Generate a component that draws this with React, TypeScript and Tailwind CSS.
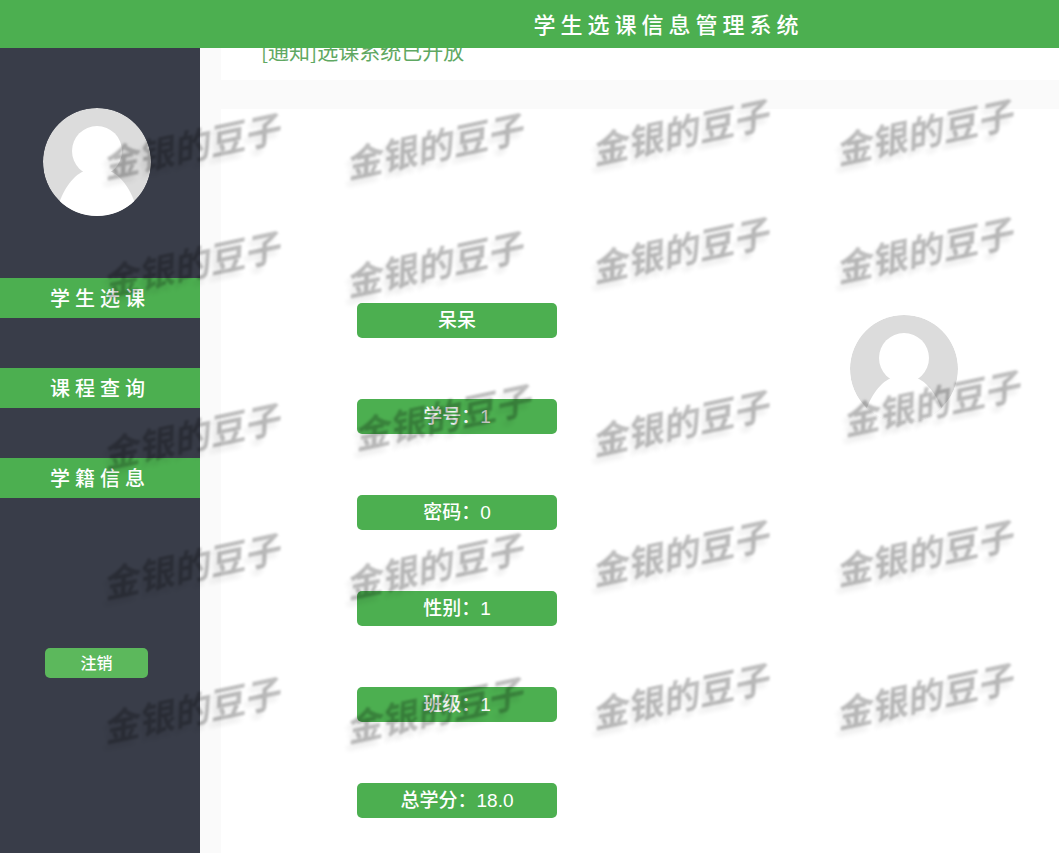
import React from "react";

const watermarkText = "金银的豆子";

const watermarks: [number, number][] = [
  [191, 148], [434, 148], [680, 134], [924, 134],
  [191, 266], [434, 266], [680, 252], [924, 252],
  [191, 438], [442, 419], [680, 425], [931, 405],
  [191, 568], [434, 568], [680, 555], [924, 555],
  [191, 712], [434, 712], [680, 698], [924, 698],
];

const menu = ["学生选课", "课程查询", "学籍信息"];

const profile = ["呆呆", "学号：1", "密码：0", "性别：1", "班级：1", "总学分：18.0"];

function Avatar() {
  return (
    <svg
      viewBox="0 0 108 108"
      className="size-[108px] shrink-0 overflow-hidden rounded-full"
      role="img"
      aria-label="头像"
    >
      <circle cx="54" cy="54" r="54" fill="#dcdcdc" />
      <circle cx="54" cy="43" r="25" fill="#fff" />
      <path d="M13 108C16 89 26 71 39 64H69C82 71 92 89 95 108Z" fill="#fff" />
    </svg>
  );
}

function Watermarks() {
  return (
    <div
      aria-hidden="true"
      className="pointer-events-none absolute inset-0 overflow-hidden select-none"
    >
      {watermarks.map(([x, y]) => (
        <span
          key={`${x}-${y}`}
          style={{ left: x, top: y }}
          className="absolute -translate-x-1/2 -translate-y-1/2 -rotate-12 text-[36px] font-bold whitespace-nowrap text-black/25 italic blur-[1px] [text-shadow:-5px_5px_5px_rgba(0,0,0,0.08)]"
        >
          {watermarkText}
        </span>
      ))}
    </div>
  );
}

export default function App() {
  return (
    <div className="relative flex min-h-screen flex-col bg-[#fafafa] font-['Liberation_Sans','Noto_Sans_CJK_SC',sans-serif]">
      <header className="relative z-10 flex h-12 items-center justify-center bg-[#4caf50] pt-0.5 pl-[278px]">
        <h1 className="text-[22px] font-medium tracking-[5px] text-white">学生选课信息管理系统</h1>
      </header>

      <div className="flex flex-1">
        <aside className="flex w-[200px] shrink-0 flex-col bg-[#393d49] pt-[60px]">
          <div className="pl-[43px]">
            <Avatar />
          </div>
          <nav className="mt-[62px] flex flex-col gap-[50px]">
            {menu.map((item) => (
              <a
                key={item}
                href="#"
                className="flex h-10 items-center justify-center bg-[#4caf50] pt-0.5 text-xl font-medium tracking-[5px] text-white"
              >
                {item}
              </a>
            ))}
          </nav>
          <button
            type="button"
            className="mt-[150px] ml-[45px] h-[30px] w-[103px] rounded-[5px] bg-[#5cb85c] pt-0.5 text-base font-medium text-white"
          >
            注销
          </button>
        </aside>

        <main className="flex min-w-0 flex-1 flex-col gap-[29px] pl-[21px]">
          <section className="flex h-8 items-end overflow-hidden bg-white pb-[18px] pl-10">
            <a
              href="#"
              className="font-['Noto_Sans_CJK_SC',sans-serif] text-[21px] leading-[24px] whitespace-nowrap text-[#5fa862]"
            >
              [通知]选课系统已开放
            </a>
          </section>

          <section className="flex flex-1 items-start gap-[293px] bg-white pt-[194px] pb-[35px] pl-[136px]">
            <div className="flex w-[200px] shrink-0 flex-col gap-[61px]">
              {profile.map((item) => (
                <button
                  key={item}
                  type="button"
                  className="h-[35px] rounded-[5px] bg-[#4caf50] pt-0.5 text-[19px] font-medium text-white"
                >
                  {item}
                </button>
              ))}
            </div>
            <div className="pt-3">
              <Avatar />
            </div>
          </section>
        </main>
      </div>

      <Watermarks />
    </div>
  );
}
